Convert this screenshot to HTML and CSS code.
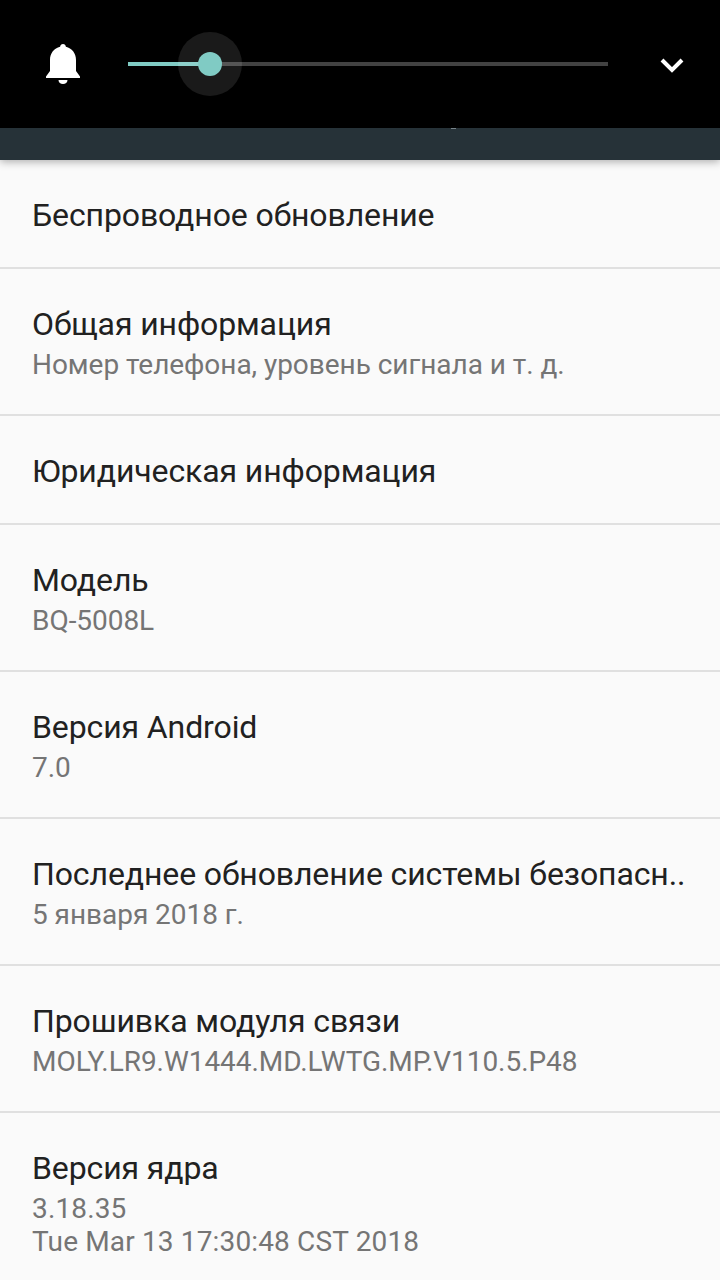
FILE: index.html
```html
<!DOCTYPE html>
<html lang="ru">
  <head>
    <meta charset="UTF-8" />
    <meta name="viewport" content="width=device-width, initial-scale=1.0" />
    <title>О телефоне</title>
    <link rel="stylesheet" href="styles.css">
  </head>
  <body>
    <div class="volume-panel">
      <svg class="bell-icon" width="48" height="48" viewBox="0 0 48 48">
        <path fill="#fff" d="M24 4c-1.6 0-2.8 1.1-2.9 2.8C15.2 8 11 13.4 11 20v11l-4 5.4V38h34v-1.6L37 31V20c0-6.6-4.2-12-10.1-13.2C26.8 5.1 25.6 4 24 4zM19.5 40h9c0 2.4-2 4-4.5 4s-4.5-1.6-4.5-4z" />
      </svg>
      <div class="slider">
        <div class="slider-fill"></div>
        <div class="slider-rest"></div>
        <div class="slider-halo"></div>
        <div class="slider-thumb"></div>
      </div>
      <svg class="chevron-icon" width="24" height="16" viewBox="0 0 24 16">
        <path fill="none" stroke="#fff" stroke-width="4" d="M2 3l10 10L22 3" />
      </svg>
    </div>

    <div class="toolbar-strip"><span class="strip-tick"></span></div>

    <div class="settings-list">
      <div class="row">
        <div class="row-title">Беспроводное обновление</div>
      </div>
      <div class="row">
        <div class="row-title">Общая информация</div>
        <div class="row-summary">Номер телефона, уровень сигнала и т. д.</div>
      </div>
      <div class="row">
        <div class="row-title">Юридическая информация</div>
      </div>
      <div class="row">
        <div class="row-title">Модель</div>
        <div class="row-summary">BQ-5008L</div>
      </div>
      <div class="row">
        <div class="row-title">Версия Android</div>
        <div class="row-summary">7.0</div>
      </div>
      <div class="row">
        <div class="row-title">Последнее обновление системы безопасн..</div>
        <div class="row-summary">5 января 2018 г.</div>
      </div>
      <div class="row">
        <div class="row-title">Прошивка модуля связи</div>
        <div class="row-summary">MOLY.LR9.W1444.MD.LWTG.MP.V110.5.P48</div>
      </div>
      <div class="row row-last">
        <div class="row-title">Версия ядра</div>
        <div class="row-summary row-summary-wide">3.18.35<br />Tue Mar 13 17:30:48 CST 2018</div>
      </div>
    </div>
  </body>
</html>
```
FILE: styles.css
```css
html,
body {
  margin: 0;
  padding: 0;
  height: 1280px;
  overflow: hidden;
}

body {
  font-family: Roboto, "Noto Sans", sans-serif;
  background-color: #fafafa;
}

.volume-panel {
  height: 128px;
  background-color: #000;
  display: flex;
  align-items: center;
  position: relative;
  z-index: 2;
}

.bell-icon {
  margin-left: 39px;
  flex: none;
}

.slider {
  position: relative;
  width: 480px;
  height: 4px;
  margin-left: 41px;
  margin-top: -1px;
  display: flex;
  flex: none;
}

.slider-fill {
  width: 82px;
  background-color: #80cbc4;
}

.slider-rest {
  flex: 1;
  background-color: #424242;
}

.slider-halo {
  position: absolute;
  left: 50px;
  top: -30px;
  width: 64px;
  height: 64px;
  border-radius: 50%;
  background-color: rgba(255, 255, 255, 0.1);
}

.slider-thumb {
  position: absolute;
  left: 70px;
  top: -10px;
  width: 24px;
  height: 24px;
  border-radius: 50%;
  background-color: #80cbc4;
}

.chevron-icon {
  margin-left: 52px;
  margin-top: 2px;
  flex: none;
}

.toolbar-strip {
  height: 32px;
  background-color: #263238;
  position: relative;
  z-index: 1;
  box-shadow: 0 2px 8px rgba(0, 0, 0, 0.3);
}

.strip-tick {
  position: absolute;
  left: 451px;
  top: 0;
  width: 5px;
  height: 1px;
  background-color: #78848a;
}

.row {
  box-sizing: border-box;
  min-height: 109px;
  padding: 35px 32px 32px;
  border-bottom: 2px solid #e0e0e0;
}

.row-title {
  font-size: 32px;
  line-height: 40px;
  letter-spacing: -0.11px;
  white-space: nowrap;
  color: #212121;
}

.row-summary {
  margin-top: 4px;
  margin-bottom: 1px;
  font-size: 28px;
  line-height: 33px;
  letter-spacing: -0.04px;
  white-space: nowrap;
  color: #757575;
}

.row-summary-wide {
  letter-spacing: 0.15px;
}

.row-last {
  border-bottom: none;
}
```
